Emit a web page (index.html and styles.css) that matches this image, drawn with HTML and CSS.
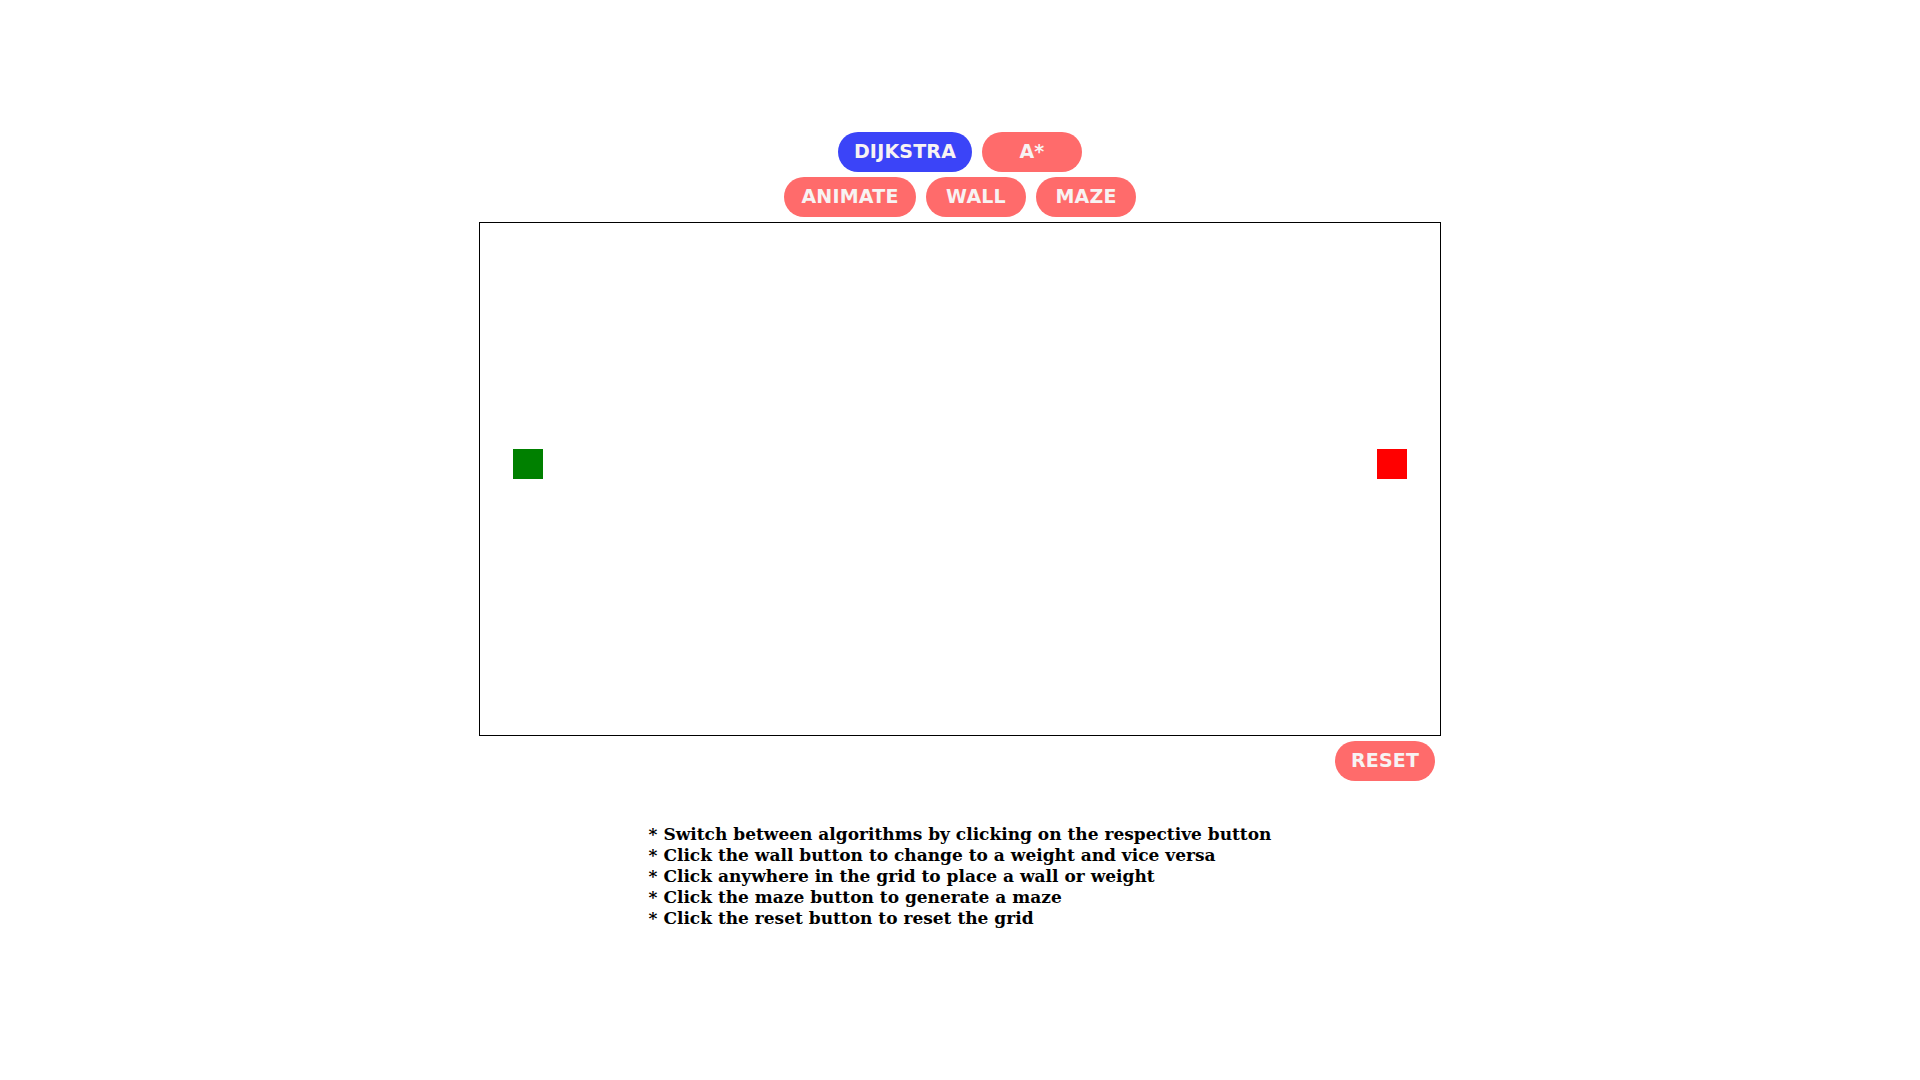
FILE: index.html
```html
<!DOCTYPE html>
<html>
<head>
<meta charset="utf-8">
<link rel="stylesheet" href="styles.css">
</head>
<body>
<div class="page">
  <div class="controls">
    <div class="row">
      <button class="btn btn-active btn-dijkstra">DIJKSTRA</button>
      <button class="btn">A*</button>
    </div>
    <div class="row">
      <button class="btn btn-animate">ANIMATE</button>
      <button class="btn">WALL</button>
      <button class="btn">MAZE</button>
    </div>
  </div>
  <div class="board">
    <div class="node node-start"></div>
    <div class="node node-end"></div>
  </div>
  <div class="reset-row">
    <button class="btn">RESET</button>
  </div>
  <div class="help">
    <div class="help-text">
      <div>* Switch between algorithms by clicking on the respective button</div>
      <div>* Click the wall button to change to a weight and vice versa</div>
      <div>* Click anywhere in the grid to place a wall or weight</div>
      <div>* Click the maze button to generate a maze</div>
      <div>* Click the reset button to reset the grid</div>
    </div>
  </div>
</div>
</body>
</html>
```
FILE: styles.css
```css
html, body {
  margin: 0;
  padding: 0;
  background: #ffffff;
}
.page {
  width: 1920px;
  display: flex;
  flex-direction: column;
  align-items: center;
  padding-top: 132px;
}
.controls {
  display: flex;
  flex-direction: column;
  align-items: center;
  gap: 5px;
}
.row {
  display: flex;
  gap: 10px;
}
.btn {
  height: 40px;
  min-width: 100px;
  padding: 0 10px 2px;
  border: none;
  border-radius: 20px;
  background: #ff6b6b;
  color: #f7f3f3;
  font-family: "DejaVu Sans", sans-serif;
  font-weight: 700;
  font-size: 19px;
  letter-spacing: 0.2px;
  cursor: pointer;
}
.btn-dijkstra { width: 134px; }
.btn-animate { width: 132px; }
.btn-active {
  background: #3b44f8;
}
.board {
  position: relative;
  margin-top: 5px;
  width: 960px;
  height: 512px;
  border: 1px solid #000;
}
.node {
  position: absolute;
  width: 30px;
  height: 30px;
}
.node-start {
  left: 33px;
  top: 226px;
  background: #008000;
}
.node-end {
  left: 897px;
  top: 226px;
  background: #ff0000;
}
.reset-row {
  width: 962px;
  display: flex;
  justify-content: flex-end;
  padding-top: 5px;
}
.reset-row .btn {
  margin-right: 6px;
}
.help {
  margin-top: 43px;
  display: flex;
  justify-content: center;
}
.help-text {
  font-family: "DejaVu Serif", serif;
  font-weight: 700;
  font-size: 17px;
  line-height: 21px;
  color: #000;
}
```
